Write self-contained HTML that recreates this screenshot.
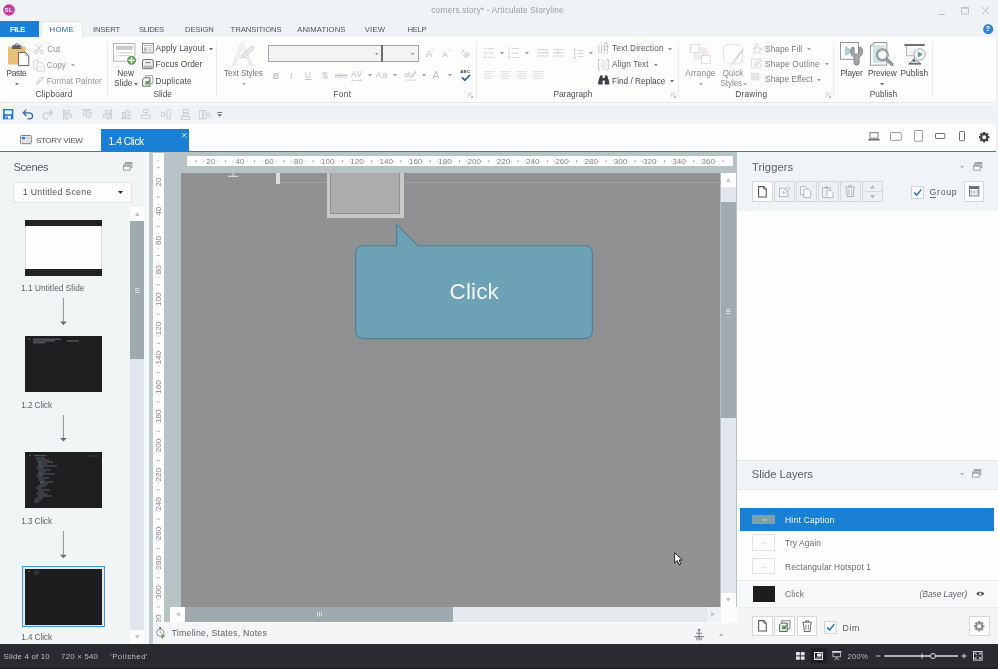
<!DOCTYPE html>
<html><head><meta charset="utf-8"><title>corners.story - Articulate Storyline</title>
<style>
*{box-sizing:border-box;margin:0;padding:0}
html,body{width:998px;height:669px;overflow:hidden}
body{position:relative;background:#eff3f5;font-family:"Liberation Sans",sans-serif;font-size:9px;color:#5a5e62}
.a{position:absolute}
.t{position:absolute;white-space:nowrap;line-height:1}
svg{position:absolute;overflow:visible}
#w{position:absolute;left:0;top:0;width:998px;height:669px;will-change:transform}

</style></head>
<body>
<div id="w">
<div class="a" style="left:0px;top:0px;width:998px;height:22px;background:#f0f3f5;"></div>
<div class="a" style="left:0px;top:22px;width:998px;height:15px;background:#f0f3f5;"></div>
<div class="a" style="left:0px;top:37px;width:998px;height:65.5px;background:#fdfdfc;"></div>
<div class="a" style="left:0px;top:102px;width:998px;height:1px;background:#e4e7ea;"></div>
<div class="a" style="left:0px;top:103px;width:998px;height:2px;background:#f8f9fa;"></div>
<div class="a" style="left:0px;top:105px;width:998px;height:19.4px;background:#eff3f5;"></div>
<div class="a" style="left:0px;top:124px;width:998px;height:27px;background:#fdfdfd;"></div>
<div class="a" style="left:0px;top:150.8px;width:998px;height:1.5px;background:#1a80d6;"></div>
<div class="a" style="left:0px;top:152px;width:149.4px;height:492px;background:#f2f5f6;"></div>
<div class="a" style="left:145.6px;top:152.3px;width:3.8px;height:491.7px;background:#f9fafb;"></div>
<div class="a" style="left:149.4px;top:152px;width:3.8px;height:492px;background:#c0cbcf;"></div>
<div class="a" style="left:153.2px;top:152px;width:583.4px;height:470px;background:#b8c3c5;"></div>
<div class="a" style="left:153.2px;top:622px;width:583.4px;height:1px;background:#fdfdfd;"></div>
<div class="a" style="left:153.2px;top:623px;width:583.4px;height:21px;background:#f3f5f6;"></div>
<div class="a" style="left:736.6px;top:152px;width:261.4px;height:492px;background:#fdfdfc;"></div>
<div class="a" style="left:0px;top:644px;width:998px;height:25px;background:#2c2a31;"></div>
<svg style="left:3px;top:3.5px" width="12" height="12" viewBox="0 0 12 12"><circle cx="6" cy="6" r="5.8" fill="#c23d9c"/></svg>
<svg style="left:938.4px;top:5.6px" width="60" height="10" viewBox="0 0 60 10"><path d="M1 8.5H7" stroke="#c2c6c9" stroke-width="1" fill="none"/><rect x="23.5" y="1.5" width="7" height="6.5" stroke="#c2c6c9" fill="none"/><path d="M23 2H31" stroke="#c2c6c9" stroke-width="1.6"/><path d="M44 1L51 8M51 1L44 8" stroke="#b4b8bb" stroke-width="1" fill="none"/></svg>
<svg style="left:982.6px;top:23.6px" width="10.4" height="10.4" viewBox="0 0 10.4 10.4"><circle cx="5.2" cy="5.2" r="5" fill="#2b74c6"/><circle cx="5.2" cy="5.2" r="3.9" fill="#3a86d6"/></svg>
<div class="a" style="left:0px;top:21.2px;width:38.8px;height:15.8px;background:#1a80d6;"></div>
<div class="a" style="left:41.3px;top:20.9px;width:42px;height:17.1px;background:#fdfdfc;border:1px solid #e1e5e8;border-bottom:none"></div>
<div class="a" style="left:106.5px;top:41px;width:1px;height:57px;background:#eaeced;"></div>
<div class="a" style="left:216px;top:41px;width:1px;height:57px;background:#eaeced;"></div>
<div class="a" style="left:475.8px;top:41px;width:1px;height:57px;background:#eaeced;"></div>
<div class="a" style="left:678px;top:41px;width:1px;height:57px;background:#eaeced;"></div>
<div class="a" style="left:833px;top:41px;width:1px;height:57px;background:#eaeced;"></div>
<div class="a" style="left:932.4px;top:41px;width:1px;height:57px;background:#eaeced;"></div>
<svg style="left:14.5px;top:83.1px" width="4" height="2.4" viewBox="0 0 4 2.4"><path d="M0 0H4L2.0 2.4Z" fill="#7a7e82"/></svg>
<svg style="left:70.6px;top:64.1px" width="4" height="2.4" viewBox="0 0 4 2.4"><path d="M0 0H4L2.0 2.4Z" fill="#a8acb0"/></svg>
<svg style="left:133.5px;top:82.8px" width="4" height="2.4" viewBox="0 0 4 2.4"><path d="M0 0H4L2.0 2.4Z" fill="#6a6e72"/></svg>
<svg style="left:209.0px;top:47.6px" width="4" height="2.4" viewBox="0 0 4 2.4"><path d="M0 0H4L2.0 2.4Z" fill="#6a6e72"/></svg>
<svg style="left:242.0px;top:83.1px" width="4" height="2.4" viewBox="0 0 4 2.4"><path d="M0 0H4L2.0 2.4Z" fill="#a8acb0"/></svg>
<div class="a" style="left:268px;top:45px;width:114px;height:16.5px;background:#f1f3f5;border:1px solid #a3a6a9"></div>
<div class="a" style="left:381.5px;top:45px;width:37px;height:16.5px;background:#f1f3f5;border:1px solid #a3a6a9"></div>
<div class="a" style="left:381.4px;top:45px;width:1.3px;height:16.5px;background:#6c6f72;"></div>
<svg style="left:375.3px;top:52.6px" width="3.4" height="2" viewBox="0 0 3.4 2"><path d="M0 0H3.4L1.7 2Z" fill="#8a8e92"/></svg>
<svg style="left:411.3px;top:52.6px" width="3.4" height="2" viewBox="0 0 3.4 2"><path d="M0 0H3.4L1.7 2Z" fill="#8a8e92"/></svg>
<svg style="left:668.0px;top:47.6px" width="4" height="2.4" viewBox="0 0 4 2.4"><path d="M0 0H4L2.0 2.4Z" fill="#8a8e92"/></svg>
<svg style="left:653.5px;top:63.6px" width="4" height="2.4" viewBox="0 0 4 2.4"><path d="M0 0H4L2.0 2.4Z" fill="#8a8e92"/></svg>
<svg style="left:670.0px;top:80.1px" width="4" height="2.4" viewBox="0 0 4 2.4"><path d="M0 0H4L2.0 2.4Z" fill="#6a6e72"/></svg>
<svg style="left:698.6px;top:83.1px" width="4" height="2.4" viewBox="0 0 4 2.4"><path d="M0 0H4L2.0 2.4Z" fill="#a8acb0"/></svg>
<svg style="left:743.0px;top:83.1px" width="4" height="2.4" viewBox="0 0 4 2.4"><path d="M0 0H4L2.0 2.4Z" fill="#a8acb0"/></svg>
<svg style="left:807.3px;top:48.1px" width="4" height="2.4" viewBox="0 0 4 2.4"><path d="M0 0H4L2.0 2.4Z" fill="#a0a4a8"/></svg>
<svg style="left:824.9px;top:63.1px" width="4" height="2.4" viewBox="0 0 4 2.4"><path d="M0 0H4L2.0 2.4Z" fill="#a0a4a8"/></svg>
<svg style="left:817.0px;top:78.5px" width="4" height="2.4" viewBox="0 0 4 2.4"><path d="M0 0H4L2.0 2.4Z" fill="#a0a4a8"/></svg>
<svg style="left:879.8px;top:83.1px" width="4" height="2.4" viewBox="0 0 4 2.4"><path d="M0 0H4L2.0 2.4Z" fill="#6a6e72"/></svg>
<div class="a" style="left:101px;top:129px;width:87.5px;height:23px;background:#1a80d6;"></div>
<svg style="left:181.5px;top:132.5px" width="4.4" height="4.4" viewBox="0 0 4.4 4.4"><path d="M0 0L4.4 4.4M4.4 0L0 4.4" stroke="#fff" stroke-width="0.9"/></svg>
<svg style="left:7px;top:43px" width="23" height="24" viewBox="0 0 23 24"><rect x="1" y="3.4" width="17.6" height="18.2" rx="1" fill="#e9bf75"/>
<rect x="5.2" y="2.2" width="9.2" height="3.8" rx="0.6" fill="#5b5b68"/><rect x="8" y="0.8" width="3.6" height="2.6" rx="1" fill="none" stroke="#5b5b68" stroke-width="1"/>
<rect x="12.6" y="4" width="1.4" height="1" fill="#7cc36a"/>
<path d="M11.6 9.4H18.4L21.8 12.8V22.6H11.6Z" fill="#fdfdfd" stroke="#55555f" stroke-width="0.9"/><path d="M18.4 9.4V12.8H21.8" fill="none" stroke="#9a9aa2" stroke-width="0.6"/></svg>
<svg style="left:33.5px;top:44px" width="10" height="10" viewBox="0 0 10 10"><path d="M1.6 0L6.6 6.6M8.4 0L3.4 6.6" stroke="#c4c7ca" stroke-width="0.9" fill="none"/><circle cx="2.2" cy="7.8" r="1.7" fill="none" stroke="#c4c7ca" stroke-width="0.9"/><circle cx="7.8" cy="7.8" r="1.7" fill="none" stroke="#c4c7ca" stroke-width="0.9"/></svg>
<svg style="left:33px;top:59.5px" width="12" height="11.5" viewBox="0 0 12 11.5"><path d="M0.5 0.5H5.4L7.4 2.5V9.2H0.5Z" fill="#fbfbfb" stroke="#cfd2d5" stroke-width="0.8"/><path d="M4 2.6H9L11.3 4.9V11H4Z" fill="#fbfbfb" stroke="#c6c9cc" stroke-width="0.8"/><path d="M5.6 6H9.4M5.6 7.6H9.4" stroke="#dcdfe1" stroke-width="0.7"/></svg>
<svg style="left:34.5px;top:76px" width="9.5" height="9.5" viewBox="0 0 9.5 9.5"><path d="M0.6 6.4L4.6 2.6L6.8 4.8L2.8 8.8Z" fill="#d9dbde"/><path d="M5.4 2L7.4 0.4L9 2L7.4 4Z" fill="#cfd2d5"/><path d="M1.2 7L3 8.6" stroke="#bfc2c5" stroke-width="0.8"/></svg>
<svg style="left:113px;top:43px" width="24" height="23" viewBox="0 0 24 23"><rect x="0.5" y="0.5" width="21.4" height="17.8" fill="#fcfcfc" stroke="#b4b7ba" stroke-width="1"/>
<rect x="3" y="2.8" width="16.6" height="4.2" fill="#c9cbcd"/><path d="M3.2 9.8H4.4M5.6 9.8H19M3.2 12.6H4.4M5.6 12.6H16" stroke="#c4c6c9" stroke-width="0.9"/>
<circle cx="18.6" cy="17.2" r="5.1" fill="#fdfdfc"/><circle cx="18.6" cy="17.2" r="4.5" fill="#62a45c"/><path d="M18.6 14.2V20.2M15.6 17.2H21.6" stroke="#eef6ec" stroke-width="1.5"/></svg>
<svg style="left:142px;top:43px" width="12" height="10.5" viewBox="0 0 12 10.5"><rect x="0.5" y="0.5" width="10.8" height="9.4" fill="#fbfbfb" stroke="#808388" stroke-width="0.9"/><path d="M2 2.6H10" stroke="#a9acb0" stroke-width="0.9"/><rect x="2" y="4.2" width="2.6" height="4.4" fill="#b6b9bc"/><path d="M5.8 4.8H9.8M5.8 6.4H9.8M5.8 8H9.8" stroke="#b0b3b6" stroke-width="0.7"/></svg>
<svg style="left:142px;top:59.4px" width="12" height="10.5" viewBox="0 0 12 10.5"><rect x="0.5" y="0.5" width="10.8" height="9.2" rx="1.6" fill="#eceeef" stroke="#6c6f74" stroke-width="1"/><rect x="1.6" y="6.6" width="8.6" height="2.4" fill="#b8bbbe"/><path d="M3.4 3.6H8.4" stroke="#7d8084" stroke-width="1.1"/></svg>
<svg style="left:142px;top:74.6px" width="12" height="12" viewBox="0 0 12 12"><path d="M3.6 0.6H10.8V8.6H3.6Z" fill="#fbfbfb" stroke="#8b8e92" stroke-width="0.8"/><path d="M0.6 4.6L2.6 2.8H8V11.2H0.6Z" fill="#fbfbfb" stroke="#55585d" stroke-width="0.9"/><path d="M3.4 6H7V9.6H3.4Z" fill="#6aa863"/><path d="M4 7.6L5 8.8L7.6 5" stroke="#3e7d3a" stroke-width="0.8" fill="none"/></svg>
<svg style="left:232px;top:43px" width="24" height="23" viewBox="0 0 24 23"><path d="M0.6 22.2L9.2 0.6H10.6L20.6 22.2H18.2L14.8 14.6H5.6L2.8 22.2Z" fill="#fcfcfc" stroke="#d3d5d8" stroke-width="0.8"/>
<path d="M6.6 12.4H13.8L10 3.4Z" fill="#fdfdfc" stroke="#d9dbde" stroke-width="0.7"/>
<path d="M9.4 15.2L10.4 11.6L19.4 2.6L22.4 5.2L13.2 14.2Z" fill="#e5e7e9" stroke="#cfd1d4" stroke-width="0.7"/></svg>
<svg style="left:351.3px;top:78.6px" width="11" height="3" viewBox="0 0 11 3"><path d="M0.6 1.5H10.4M2 0.2L0.6 1.5L2 2.8M9 0.2L10.4 1.5L9 2.8" stroke="#c6c9cc" stroke-width="0.7" fill="none"/></svg>
<svg style="left:367.5px;top:74.4px" width="4" height="2.4" viewBox="0 0 4 2.4"><path d="M0 0H4L2.0 2.4Z" fill="#9a9ea2"/></svg>
<svg style="left:392.6px;top:74.4px" width="4" height="2.4" viewBox="0 0 4 2.4"><path d="M0 0H4L2.0 2.4Z" fill="#9a9ea2"/></svg>
<svg style="left:404.5px;top:70px" width="12" height="11" viewBox="0 0 12 11"><path d="M6.2 7.4L11 1.2" stroke="#c9ccce" stroke-width="1.6"/><path d="M0.4 10.2H11.4" stroke="#dfe1e3" stroke-width="1.2"/></svg>
<svg style="left:422.0px;top:74.4px" width="4" height="2.4" viewBox="0 0 4 2.4"><path d="M0 0H4L2.0 2.4Z" fill="#9a9ea2"/></svg>
<svg style="left:447.5px;top:74.4px" width="4" height="2.4" viewBox="0 0 4 2.4"><path d="M0 0H4L2.0 2.4Z" fill="#9a9ea2"/></svg>
<svg style="left:460.5px;top:73.5px" width="10" height="7.5" viewBox="0 0 10 7.5"><path d="M1 3.4L3.8 6.2L9 0.8" stroke="#2b6ca3" stroke-width="1.7" fill="none"/></svg>
<svg style="left:432.2px;top:47.6px" width="3" height="3" viewBox="0 0 3 3"><path d="M0.2 2.4L1.5 0.6L2.8 2.4" stroke="#c6c9cc" stroke-width="0.7" fill="none"/></svg>
<svg style="left:448.4px;top:48px" width="3" height="3" viewBox="0 0 3 3"><path d="M0.2 0.6L1.5 2.4L2.8 0.6" stroke="#c6c9cc" stroke-width="0.7" fill="none"/></svg>
<svg style="left:462px;top:50.6px" width="9.5" height="8" viewBox="0 0 9.5 8"><path d="M0.6 5L5.4 0.6L8.8 3.6L4 7.6Z" fill="#dcdee0"/></svg>
<svg style="left:467.6px;top:92.8px" width="5" height="5" viewBox="0 0 5 5"><path d="M0.4 4V0.4H4" stroke="#c3c6c9" stroke-width="0.8" fill="none"/><path d="M2 2L4.4 4.4M4.6 2.6V4.6H2.6" stroke="#aeb1b4" stroke-width="0.8" fill="none"/></svg>
<svg style="left:670.6px;top:92.8px" width="5" height="5" viewBox="0 0 5 5"><path d="M0.4 4V0.4H4" stroke="#c3c6c9" stroke-width="0.8" fill="none"/><path d="M2 2L4.4 4.4M4.6 2.6V4.6H2.6" stroke="#aeb1b4" stroke-width="0.8" fill="none"/></svg>
<svg style="left:826px;top:92.8px" width="5" height="5" viewBox="0 0 5 5"><path d="M0.4 4V0.4H4" stroke="#c3c6c9" stroke-width="0.8" fill="none"/><path d="M2 2L4.4 4.4M4.6 2.6V4.6H2.6" stroke="#aeb1b4" stroke-width="0.8" fill="none"/></svg>
<svg style="left:484px;top:47px" width="11" height="12" viewBox="0 0 11 12"><path d="M3.4 1.5H10M3.4 6H10M3.4 10.4H10" stroke="#cfd2d4" stroke-width="0.9"/><path d="M0.4 1.5H1.8M0.4 6H1.8M0.4 10.4H1.8" stroke="#c3c6c9" stroke-width="1.2"/></svg>
<svg style="left:500.2px;top:52.4px" width="4" height="2.4" viewBox="0 0 4 2.4"><path d="M0 0H4L2.0 2.4Z" fill="#9a9ea2"/></svg>
<svg style="left:508.4px;top:47px" width="11.5" height="12" viewBox="0 0 11.5 12"><path d="M3.6 1.5H11M3.6 6H11M3.6 10.4H11" stroke="#cfd2d4" stroke-width="0.9"/><path d="M1 0V3M1 4.5V7.5M1 9V12" stroke="#c3c6c9" stroke-width="0.9"/></svg>
<svg style="left:525.0px;top:52.4px" width="4" height="2.4" viewBox="0 0 4 2.4"><path d="M0 0H4L2.0 2.4Z" fill="#9a9ea2"/></svg>
<svg style="left:537px;top:49.4px" width="12" height="8" viewBox="0 0 12 8"><path d="M0 0.6H11.6M0 3.8H7M0 7H11.6" stroke="#cfd2d4" stroke-width="0.9"/><path d="M5.4 3.8H11M9.4 2.2L11 3.8L9.4 5.4" stroke="#c3c6c9" stroke-width="0.8" fill="none"/></svg>
<svg style="left:553.4px;top:49.4px" width="12" height="8" viewBox="0 0 12 8"><path d="M0 0.6H11.6M4.6 3.8H11.6M0 7H11.6" stroke="#cfd2d4" stroke-width="0.9"/><path d="M0.4 3.8H6M4.4 2.2L6 3.8L4.4 5.4" stroke="#c3c6c9" stroke-width="0.8" fill="none"/></svg>
<svg style="left:573.4px;top:47.6px" width="11" height="11.5" viewBox="0 0 11 11.5"><path d="M4.6 2.6H10.6M4.6 5.6H10.6M4.6 8.6H10.6" stroke="#cfd2d4" stroke-width="0.9"/><path d="M1.6 0.6V10.8M0.2 2L1.6 0.6L3 2M0.2 9.4L1.6 10.8L3 9.4" stroke="#c3c6c9" stroke-width="0.8" fill="none"/></svg>
<svg style="left:589.3px;top:52.4px" width="4" height="2.4" viewBox="0 0 4 2.4"><path d="M0 0H4L2.0 2.4Z" fill="#9a9ea2"/></svg>
<svg style="left:484.1px;top:71px" width="10.4" height="8.5" viewBox="0 0 10.4 8.5"><path d="M0 0.6H10.4M0 2.9H7.4M0 5.2H10.4M0 7.5H7.4" stroke="#d3d6d8" stroke-width="0.8" fill="none"/></svg>
<svg style="left:500.1px;top:71px" width="10.4" height="8.5" viewBox="0 0 10.4 8.5"><path d="M0 0.6H10.4M1.6 2.9H8.8M0 5.2H10.4M1.6 7.5H8.8" stroke="#d3d6d8" stroke-width="0.8" fill="none"/></svg>
<svg style="left:516.4px;top:71px" width="10.4" height="8.5" viewBox="0 0 10.4 8.5"><path d="M0 0.6H10.4M3 2.9H10.4M0 5.2H10.4M3 7.5H10.4" stroke="#d3d6d8" stroke-width="0.8" fill="none"/></svg>
<svg style="left:532.5px;top:71px" width="10.4" height="8.5" viewBox="0 0 10.4 8.5"><path d="M0 0.6H10.4M0 2.9H10.4M0 5.2H10.4M0 7.5H10.4" stroke="#d3d6d8" stroke-width="0.8" fill="none"/></svg>
<svg style="left:598.2px;top:42px" width="11" height="12" viewBox="0 0 11 12"><path d="M0.8 2.6V11.6M3.4 2.6V11.6" stroke="#b9bcbf" stroke-width="0.8"/><path d="M6.2 11.6V4.4M9.6 11.6V4.4M6.2 7.6H9.6" stroke="#b9bcbf" stroke-width="0.8" fill="none"/><path d="M5.6 4.6L7.9 0.4L10.2 4.6Z" fill="none" stroke="#aeb1b4" stroke-width="0.8"/></svg>
<svg style="left:598.2px;top:59px" width="11" height="11.4" viewBox="0 0 11 11.4"><path d="M2.4 0.5H0.5V10.8H2.4M8.4 0.5H10.3V10.8H8.4" stroke="#b4b7ba" stroke-width="0.8" fill="none"/><path d="M2.6 4.2H8.2M2.6 5.8H8.2M2.6 7.4H8.2" stroke="#d0d3d5" stroke-width="0.7"/><path d="M4.2 2.6L5.4 1.2L6.6 2.6M4.2 8.8L5.4 10.2L6.6 8.8" stroke="#b4b7ba" stroke-width="0.7" fill="none"/></svg>
<svg style="left:598px;top:75px" width="11.4" height="10" viewBox="0 0 11.4 10"><path d="M2.2 0.6H4.6V3H6.8V0.6H9.2L11.2 6.4V9.4H6.8V5.4H4.6V9.4H0.2V6.4Z" fill="#3c3c45"/><path d="M0.2 6.6H4.6M6.8 6.6H11.2" stroke="#6d6d76" stroke-width="0.6"/></svg>
<svg style="left:689.6px;top:44px" width="21" height="20" viewBox="0 0 21 20"><rect x="3.6" y="3.6" width="13.6" height="12" fill="#f2e9eb"/><rect x="7.2" y="7" width="4.4" height="4" fill="#f8f2f3"/>
<rect x="0.5" y="0.5" width="8.6" height="8.2" fill="#fdfdfc" stroke="#d4d6d9" stroke-width="0.8"/><rect x="11.6" y="11.3" width="8.6" height="8.2" fill="#fdfdfc" stroke="#d4d6d9" stroke-width="0.8"/></svg>
<svg style="left:723.4px;top:44.4px" width="22" height="21.5" viewBox="0 0 22 21.5"><rect x="0.5" y="0.5" width="19" height="19.4" rx="4.6" fill="#fdfdfc" stroke="#dcdee0" stroke-width="0.9"/>
<path d="M21.2 5.6L14.6 14.6L12.8 13.4L19.6 4.6Z" fill="#d5d7da"/><path d="M12.6 13.6L14.6 15L11 19.8L7.6 20.6L9.6 17.6Z" fill="#dfe1e3"/></svg>
<svg style="left:751.6px;top:43.4px" width="11" height="10.5" viewBox="0 0 11 10.5"><path d="M1.4 5L2.6 9.4H7.4L8.6 5Z" fill="#fdfdfc" stroke="#c9ccce" stroke-width="0.8"/><path d="M3.6 5V1.6C3.6 0.2 5.6 0.2 5.6 1.6V3.4" stroke="#c9ccce" stroke-width="0.8" fill="none"/><path d="M8.8 4.6C10.4 5.6 10.4 7.2 9.6 8" stroke="#d4d6d9" stroke-width="0.8" fill="none"/><path d="M0 10H9" stroke="#e8e9eb" stroke-width="0.9"/></svg>
<svg style="left:751.2px;top:58.4px" width="11.5" height="10.5" viewBox="0 0 11.5 10.5"><path d="M7 0.8H0.5V9.8H9.6V5" stroke="#d6d8db" stroke-width="0.8" fill="none"/><path d="M3.6 7.8L4.2 5.6L9.2 0.6L10.8 2.2L5.8 7.2Z" fill="#fdfdfc" stroke="#bfc2c5" stroke-width="0.8"/></svg>
<svg style="left:751.2px;top:73.4px" width="10" height="9" viewBox="0 0 10 9"><rect x="2.4" y="2.4" width="7" height="5.8" fill="#ecedef"/><rect x="0.4" y="0.4" width="7.2" height="5.8" fill="#e3e5e7" stroke="#d6d8db" stroke-width="0.6"/></svg>
<svg style="left:840.4px;top:42.2px" width="23" height="23.5" viewBox="0 0 23 23.5"><rect x="0.5" y="0.5" width="18" height="16.8" fill="#fcfcfc" stroke="#8b8e92" stroke-width="0.9"/>
<path d="M5.8 4.8V13.2L11.6 9Z" fill="#b9d6dd" stroke="#7fb0bc" stroke-width="0.8"/>
<path d="M12.2 5.2C10.6 6.6 10.4 9 10.8 10.6C11.2 13 12.6 14.6 14.2 15.4V21.4C14.2 23.6 19 23.6 19 21.4V15.4C20.6 14.6 22 13 22.4 10.6C22.8 9 22.6 6.6 21 5.2L19.2 5.8V10C19.2 11.6 18.2 12.2 16.6 12.2C15 12.2 14 11.6 14 10V5.8Z" fill="#a6a9ac" stroke="#6b6e72" stroke-width="0.8" stroke-linejoin="round"/></svg>
<svg style="left:869.6px;top:42.2px" width="24" height="24" viewBox="0 0 24 24"><path d="M4 0.5H16.8V23.2H0.5V4Z" fill="#fcfcfc" stroke="#8b8e92" stroke-width="0.9"/><path d="M4 0.5V4H0.5" fill="none" stroke="#8b8e92" stroke-width="0.7"/>
<rect x="3" y="3.2" width="11.6" height="17.6" fill="#cfe4e9"/>
<path d="M16.6 17.2L22 22.4" stroke="#74777b" stroke-width="3" stroke-linecap="round"/><path d="M16.6 17.2L22 22.4" stroke="#a9acaf" stroke-width="1.4" stroke-linecap="round"/>
<circle cx="12.4" cy="12.8" r="5.4" fill="#fafcfc" stroke="#85888c" stroke-width="2.2"/><circle cx="12.4" cy="12.8" r="5.4" fill="none" stroke="#b9bcbf" stroke-width="0.8"/></svg>
<svg style="left:904px;top:44px" width="22" height="21" viewBox="0 0 22 21"><path d="M0.4 1H20.8" stroke="#4b4b55" stroke-width="1.6"/><path d="M2.6 2V11.8H13" stroke="#a4a7aa" stroke-width="0.9" fill="none"/><path d="M5 5H12M5 7.2H11M5 9.4H10" stroke="#dcdee0" stroke-width="0.8"/>
<path d="M10.4 12V17.4M5 19.6L8.4 16.8H13L16.6 19.6Z" fill="#dfe1e3" stroke="#66686e" stroke-width="0.8"/><path d="M4.6 20H17" stroke="#4b4b55" stroke-width="1"/>
<path d="M8.8 14.6L11.2 17L8.6 17.4Z" fill="#44444c"/>
<circle cx="15.6" cy="10.4" r="5.6" fill="#fcfcfc" stroke="#8e9195" stroke-width="0.8"/><path d="M13.8 7.2V13.6L18.8 10.4Z" fill="#5d9bab"/></svg>
<svg style="left:3px;top:109.4px" width="10.5" height="10.5" viewBox="0 0 10.5 10.5"><rect x="0.5" y="0.5" width="9.4" height="9.4" fill="#1c79c9" stroke="#1c69b4" stroke-width="0.8"/><rect x="1.6" y="1.4" width="7.2" height="3.8" fill="#f4f8fc"/><rect x="2.6" y="6.8" width="5.2" height="3" fill="#f4f8fc"/><rect x="3.4" y="7.6" width="1.6" height="2.2" fill="#1c69b4"/></svg>
<svg style="left:22px;top:109.0px" width="11.5" height="10.5" viewBox="0 0 11.5 10.5"><path d="M1.4 3.8H6.8C9.4 3.8 10.6 5.4 10.6 7C10.6 8.6 9.2 9.8 7.4 9.8H5.6" stroke="#2f66a6" stroke-width="1.25" fill="none"/><path d="M4.4 0.6L1.2 3.8L4.4 7" stroke="#2f66a6" stroke-width="1.25" fill="none"/></svg>
<svg style="left:42px;top:109.0px" width="11.5" height="10.5" viewBox="0 0 11.5 10.5"><path d="M10 3.8H4.8C2.2 3.8 1 5.4 1 7C1 8.6 2.4 9.8 4.2 9.8H6" stroke="#c9ccd0" stroke-width="1.2" fill="none"/><path d="M7.2 0.6L10.4 3.8L7.2 7" stroke="#c6c9cc" stroke-width="1.3" fill="none"/></svg>
<svg style="left:62.6px;top:109.0px" width="9.5" height="11" viewBox="0 0 9.5 11"><path d="M0.6 0V10.6" stroke="#c3c8cc" stroke-width="0.9"/><rect x="2" y="1.4" width="4.6" height="2.6" fill="none" stroke="#c3c8cc" stroke-width="0.8"/><rect x="2" y="5.4" width="6.6" height="2.6" fill="none" stroke="#c3c8cc" stroke-width="0.8"/><path d="M5 9.6H2M3.2 8.6L2 9.6L3.2 10.6" stroke="#c3c8cc" stroke-width="0.7" fill="none"/></svg>
<svg style="left:81.8px;top:109.2px" width="11" height="10" viewBox="0 0 11 10"><path d="M0 0.6H10.4" stroke="#c3c8cc" stroke-width="0.9"/><rect x="1.4" y="2" width="2.4" height="4.6" fill="none" stroke="#c3c8cc" stroke-width="0.8"/><rect x="4.8" y="2" width="2.4" height="6.6" fill="none" stroke="#c3c8cc" stroke-width="0.8"/><path d="M9.2 8V3M8.2 4.2L9.2 3L10.2 4.2" stroke="#c3c8cc" stroke-width="0.7" fill="none"/></svg>
<svg style="left:103px;top:109.0px" width="9.5" height="11" viewBox="0 0 9.5 11"><path d="M8.6 0V10.6" stroke="#c3c8cc" stroke-width="0.9"/><rect x="2.6" y="1.4" width="4.6" height="2.6" fill="none" stroke="#c3c8cc" stroke-width="0.8"/><rect x="0.6" y="5.4" width="6.6" height="2.6" fill="none" stroke="#c3c8cc" stroke-width="0.8"/><path d="M3.6 9.6H6.6M5.4 8.6L6.6 9.6L5.4 10.6" stroke="#c3c8cc" stroke-width="0.7" fill="none"/></svg>
<svg style="left:121.4px;top:109.2px" width="11" height="10" viewBox="0 0 11 10"><path d="M0 9.6H10.4" stroke="#c3c8cc" stroke-width="0.9"/><rect x="1.4" y="3.6" width="2.4" height="4.6" fill="none" stroke="#c3c8cc" stroke-width="0.8"/><rect x="4.8" y="1.6" width="2.4" height="6.6" fill="none" stroke="#c3c8cc" stroke-width="0.8"/><path d="M9.2 2V7M8.2 5.8L9.2 7L10.2 5.8" stroke="#c3c8cc" stroke-width="0.7" fill="none"/></svg>
<svg style="left:141px;top:109.2px" width="10" height="10.5" viewBox="0 0 10 10.5"><rect x="2.6" y="0.6" width="4.4" height="3" fill="none" stroke="#c3c8cc" stroke-width="0.8"/><rect x="0.6" y="6.2" width="8.4" height="3.2" fill="none" stroke="#c3c8cc" stroke-width="0.8"/><path d="M4.8 3.6V6.2" stroke="#c3c8cc" stroke-width="0.8"/></svg>
<svg style="left:160.6px;top:109.2px" width="10.5" height="10.5" viewBox="0 0 10.5 10.5"><rect x="0.6" y="3.2" width="3" height="4.4" fill="none" stroke="#c3c8cc" stroke-width="0.8"/><rect x="6" y="0.8" width="3.2" height="9" fill="none" stroke="#c3c8cc" stroke-width="0.8"/><path d="M3.6 5.4H6" stroke="#c3c8cc" stroke-width="0.8"/></svg>
<svg style="left:181.4px;top:109.0px" width="10" height="11" viewBox="0 0 10 11"><rect x="2.2" y="0.6" width="5" height="2.8" fill="none" stroke="#c3c8cc" stroke-width="0.8"/><rect x="2.2" y="4.2" width="5" height="2.8" fill="none" stroke="#c3c8cc" stroke-width="0.8"/><rect x="0.6" y="7.8" width="8.2" height="2.8" fill="none" stroke="#c3c8cc" stroke-width="0.8"/></svg>
<svg style="left:199.4px;top:109.6px" width="12" height="9.5" viewBox="0 0 12 9.5"><rect x="0.6" y="0.6" width="2.8" height="8.2" fill="none" stroke="#c3c8cc" stroke-width="0.8"/><rect x="4.2" y="0.6" width="2.8" height="8.2" fill="none" stroke="#c3c8cc" stroke-width="0.8"/><rect x="8" y="3" width="2.8" height="3.4" fill="none" stroke="#c3c8cc" stroke-width="0.8"/></svg>
<svg style="left:216.6px;top:112.4px" width="5.4" height="5" viewBox="0 0 5.4 5"><path d="M0.2 0.5H5.2" stroke="#6a6e72" stroke-width="0.9"/><path d="M0.4 2.2H5L2.7 4.8Z" fill="#6a6e72"/></svg>
<svg style="left:20px;top:135.4px" width="12" height="9.4" viewBox="0 0 12 9.4"><rect x="0.5" y="0.5" width="10.8" height="8.2" rx="0.8" fill="#f4f5f6" stroke="#6f7276" stroke-width="0.9"/><rect x="1.8" y="1.8" width="3.4" height="2.6" fill="#2f7fd0"/><rect x="6.2" y="1.8" width="3.6" height="2.6" fill="#c9ccce"/><rect x="1.8" y="5.4" width="3.4" height="2.2" fill="#d5d7da"/><rect x="6.2" y="5.4" width="3.6" height="2.2" fill="#d5d7da"/></svg>
<svg style="left:868.4px;top:131.6px" width="12" height="9" viewBox="0 0 12 9"><rect x="2" y="0.6" width="8" height="5.6" fill="#fdfdfd" stroke="#85888c" stroke-width="1.1"/><path d="M0.2 7.8H11.8" stroke="#6d7074" stroke-width="1.5"/></svg>
<svg style="left:890.2px;top:131.8px" width="11.8" height="8.8" viewBox="0 0 11.8 8.8"><rect x="0.5" y="0.5" width="10.8" height="7.8" rx="0.8" fill="#fdfdfd" stroke="#8e9195" stroke-width="0.9"/></svg>
<svg style="left:913.8px;top:130px" width="9.2" height="11.8" viewBox="0 0 9.2 11.8"><rect x="0.5" y="0.5" width="8.2" height="10.8" rx="0.8" fill="#fdfdfd" stroke="#8e9195" stroke-width="0.9"/></svg>
<svg style="left:934.9px;top:133px" width="10.4" height="6" viewBox="0 0 10.4 6"><rect x="0.5" y="0.5" width="9.4" height="5" rx="0.5" fill="#fdfdfd" stroke="#6d7074" stroke-width="1"/></svg>
<svg style="left:959px;top:130.9px" width="6" height="10.2" viewBox="0 0 6 10.2"><rect x="0.5" y="0.5" width="5" height="9.2" rx="0.7" fill="#fdfdfd" stroke="#6d7074" stroke-width="1"/></svg>
<svg style="left:979.3px;top:131.5px" width="10.4" height="10.4" viewBox="0 0 10.4 10.4"><rect x="4.06" y="0" width="2.29" height="10.40" fill="#3f3f49" transform="rotate(0 5.2 5.2)"/><rect x="4.06" y="0" width="2.29" height="10.40" fill="#3f3f49" transform="rotate(45 5.2 5.2)"/><rect x="4.06" y="0" width="2.29" height="10.40" fill="#3f3f49" transform="rotate(90 5.2 5.2)"/><rect x="4.06" y="0" width="2.29" height="10.40" fill="#3f3f49" transform="rotate(135 5.2 5.2)"/><circle cx="5.2" cy="5.2" r="3.85" fill="#3f3f49"/><circle cx="5.2" cy="5.2" r="1.98" fill="#fdfdfd"/></svg>
<div class="a" style="left:996px;top:37px;width:2px;height:115.4px;background:#f0f3f5;"></div>
<svg style="left:123px;top:162px" width="9.46" height="8.8" viewBox="0 0 8.6 8"><rect x="2" y="0.5" width="6" height="4.6" fill="#f2f5f6" stroke="#9da1a5" stroke-width="0.9"/><path d="M2 1.4H8" stroke="#9da1a5" stroke-width="1.4"/><rect x="0.5" y="2.8" width="6" height="4.6" fill="#fdfdfd" stroke="#9da1a5" stroke-width="0.9"/><path d="M0.5 3.6H6.5" stroke="#9da1a5" stroke-width="1.4"/></svg>
<div class="a" style="left:13.4px;top:181.5px;width:118.6px;height:21.1px;background:#fdfdfd;border:1px solid #e1e5e8"></div>
<svg style="left:117.8px;top:191.3px" width="5" height="3" viewBox="0 0 5 3"><path d="M0 0H5L2.5 3Z" fill="#2a2a2e"/></svg>
<div class="a" style="left:130px;top:207px;width:14.4px;height:437px;background:#e1e5ed;"></div>
<div class="a" style="left:130px;top:207px;width:14.4px;height:14px;background:#fdfdfd;"></div>
<svg style="left:135px;top:211.6px" width="4.6" height="4" viewBox="0 0 4.6 4"><path d="M2.3 0L4.6 4H0Z" fill="#c0c4c8"/></svg>
<div class="a" style="left:130px;top:221px;width:14.4px;height:137.5px;background:#9faaaf;"></div>
<svg style="left:135px;top:288px" width="4.4" height="5" viewBox="0 0 4.4 5"><path d="M0 0.5H4.4M0 2.5H4.4M0 4.5H4.4" stroke="#e8ecef" stroke-width="0.8"/></svg>
<div class="a" style="left:130px;top:630px;width:14.4px;height:14px;background:#fdfdfd;"></div>
<svg style="left:135px;top:634.6px" width="4.6" height="4" viewBox="0 0 4.6 4"><path d="M0 0H4.6L2.3 4Z" fill="#c0c4c8"/></svg>
<div class="a" style="left:24.7px;top:219.5px;width:77.8px;height:56px;background:#fdfdfd;border:1px solid #d8dcdf"></div>
<div class="a" style="left:24.7px;top:219.5px;width:77.8px;height:6.4px;background:#232326;"></div>
<div class="a" style="left:24.7px;top:269px;width:77.8px;height:6.5px;background:#232326;"></div>
<svg style="left:60.4px;top:298.4px" width="6.8" height="27.2" viewBox="0 0 6.8 27.200000000000045"><path d="M3.4 0V24.200000000000045" stroke="#8e9296" stroke-width="1"/><path d="M0 23.600000000000044H6.8L3.4 27.200000000000045Z" fill="#6b6e74"/></svg>
<div class="a" style="left:24.7px;top:335.7px;width:77.8px;height:55.9px;background:#1e1e20;"></div>
<svg style="left:27px;top:338px" width="60" height="8" viewBox="0 0 60 8"><path d="M1 1.2H3M6 1.2H34M6 3H28M6 4.8H18M40 3H52" stroke="#7d8288" stroke-width="0.8"/></svg>
<svg style="left:60.4px;top:414.9px" width="6.8" height="26.5" viewBox="0 0 6.8 26.5"><path d="M3.4 0V23.5" stroke="#8e9296" stroke-width="1"/><path d="M0 22.9H6.8L3.4 26.5Z" fill="#6b6e74"/></svg>
<div class="a" style="left:24.7px;top:452.3px;width:77.8px;height:55.5px;background:#1f1f22;"></div>
<svg style="left:27px;top:454px" width="74" height="52" viewBox="0 0 74 52"><path d="M2 1.6H4M7 1.6H20M9 4H18M9 6H22M11 8H26M11 10H20M11 12H30M9 14H17M11 16H24M11 18H19M11 20H28M9 22H16M11 24H22M11 26H18M13 28H26M13 30H21M11 32H19M9 34H15M11 36H23M11 38H17M9 40H20M11 42H25M9 44H16M7 46H14M7 48H12" stroke="#6f757c" stroke-width="0.7"/>
<path d="M11 8H14M11 12H15M13 28H17M11 20H15" stroke="#4f7fb5" stroke-width="0.7"/><path d="M60 2H72" stroke="#3a3d42" stroke-width="1"/></svg>
<svg style="left:60.4px;top:530.7px" width="6.8" height="27.3" viewBox="0 0 6.8 27.299999999999955"><path d="M3.4 0V24.299999999999955" stroke="#8e9296" stroke-width="1"/><path d="M0 23.699999999999953H6.8L3.4 27.299999999999955Z" fill="#6b6e74"/></svg>
<div class="a" style="left:22.4px;top:566px;width:82.3px;height:61px;background:#e6eaec;border:1px solid #3f96da"></div>
<div class="a" style="left:25px;top:568.6px;width:77.4px;height:56px;background:#1d1d1f;"></div>
<svg style="left:27px;top:570px" width="20" height="8" viewBox="0 0 20 8"><path d="M1 1.2H3" stroke="#6a6d72" stroke-width="0.8"/><rect x="7" y="0.6" width="5" height="4" fill="#34363a"/></svg>
<div class="a" style="left:181.2px;top:172.6px;width:539.3px;height:434.4px;background:#909192;"></div>
<div class="a" style="left:279px;top:181.5px;width:441.5px;height:1px;background:#9e9f9f;"></div>
<div class="a" style="left:276.2px;top:172.6px;width:3.4px;height:11.4px;background:#dcdcdb;"></div>
<svg style="left:228px;top:172.6px" width="10.4" height="4.2" viewBox="0 0 10.4 4.2"><path d="M5.2 0V3M0 3.4H10.4" stroke="#d6d6d5" stroke-width="1.4"/></svg>
<div class="a" style="left:326.8px;top:172.6px;width:77px;height:45.9px;background:#c9c9c8;"></div>
<div class="a" style="left:330px;top:172.6px;width:70.4px;height:41.6px;background:#adadab;border:0.8px solid #8f8f8e;border-top:none"></div>
<svg style="left:355px;top:223px" width="239" height="117" viewBox="0 0 239 117"><path d="M8.6 22.8H41.6V1.2L62.8 22.8H229.4Q237.4 22.8 237.4 30.8V107.6Q237.4 115.6 229.4 115.6H8.6Q0.6 115.6 0.6 107.6V30.8Q0.6 22.8 8.6 22.8Z" fill="#6ca1b6" stroke="#4f7f95" stroke-width="1.1"/></svg>
<div class="a" style="left:153.2px;top:152.8px;width:10.6px;height:469.2px;background:#fdfdfd;"></div>
<div class="a" style="left:187px;top:155.9px;width:545.6px;height:10.4px;background:#fdfdfd;"></div>
<svg style="left:187px;top:155.9px" width="545.6" height="10.4" viewBox="0 0 545.6 10.4"><rect x="1.12" y="4.8" width="0.8" height="0.9" fill="#9a9ea2"/><path d="M8.85 3.9V6.7" stroke="#959a9e" stroke-width="0.8"/><rect x="15.77" y="4.8" width="0.8" height="0.9" fill="#9a9ea2"/><rect x="30.42" y="4.8" width="0.8" height="0.9" fill="#9a9ea2"/><path d="M38.15 3.9V6.7" stroke="#959a9e" stroke-width="0.8"/><rect x="45.07" y="4.8" width="0.8" height="0.9" fill="#9a9ea2"/><rect x="59.73" y="4.8" width="0.8" height="0.9" fill="#9a9ea2"/><path d="M67.45 3.9V6.7" stroke="#959a9e" stroke-width="0.8"/><rect x="74.37" y="4.8" width="0.8" height="0.9" fill="#9a9ea2"/><rect x="89.03" y="4.8" width="0.8" height="0.9" fill="#9a9ea2"/><path d="M96.75 3.9V6.7" stroke="#959a9e" stroke-width="0.8"/><rect x="103.67" y="4.8" width="0.8" height="0.9" fill="#9a9ea2"/><rect x="118.33" y="4.8" width="0.8" height="0.9" fill="#9a9ea2"/><path d="M126.05 3.9V6.7" stroke="#959a9e" stroke-width="0.8"/><rect x="132.97" y="4.8" width="0.8" height="0.9" fill="#9a9ea2"/><rect x="147.62" y="4.8" width="0.8" height="0.9" fill="#9a9ea2"/><path d="M155.35 3.9V6.7" stroke="#959a9e" stroke-width="0.8"/><rect x="162.28" y="4.8" width="0.8" height="0.9" fill="#9a9ea2"/><rect x="176.92" y="4.8" width="0.8" height="0.9" fill="#9a9ea2"/><path d="M184.65 3.9V6.7" stroke="#959a9e" stroke-width="0.8"/><rect x="191.58" y="4.8" width="0.8" height="0.9" fill="#9a9ea2"/><rect x="206.22" y="4.8" width="0.8" height="0.9" fill="#9a9ea2"/><path d="M213.95 3.9V6.7" stroke="#959a9e" stroke-width="0.8"/><rect x="220.87" y="4.8" width="0.8" height="0.9" fill="#9a9ea2"/><rect x="235.53" y="4.8" width="0.8" height="0.9" fill="#9a9ea2"/><path d="M243.25 3.9V6.7" stroke="#959a9e" stroke-width="0.8"/><rect x="250.17" y="4.8" width="0.8" height="0.9" fill="#9a9ea2"/><rect x="264.83" y="4.8" width="0.8" height="0.9" fill="#9a9ea2"/><path d="M272.55 3.9V6.7" stroke="#959a9e" stroke-width="0.8"/><rect x="279.48" y="4.8" width="0.8" height="0.9" fill="#9a9ea2"/><rect x="294.12" y="4.8" width="0.8" height="0.9" fill="#9a9ea2"/><path d="M301.85 3.9V6.7" stroke="#959a9e" stroke-width="0.8"/><rect x="308.78" y="4.8" width="0.8" height="0.9" fill="#9a9ea2"/><rect x="323.43" y="4.8" width="0.8" height="0.9" fill="#9a9ea2"/><path d="M331.15 3.9V6.7" stroke="#959a9e" stroke-width="0.8"/><rect x="338.08" y="4.8" width="0.8" height="0.9" fill="#9a9ea2"/><rect x="352.73" y="4.8" width="0.8" height="0.9" fill="#9a9ea2"/><path d="M360.45 3.9V6.7" stroke="#959a9e" stroke-width="0.8"/><rect x="367.38" y="4.8" width="0.8" height="0.9" fill="#9a9ea2"/><rect x="382.02" y="4.8" width="0.8" height="0.9" fill="#9a9ea2"/><path d="M389.75 3.9V6.7" stroke="#959a9e" stroke-width="0.8"/><rect x="396.68" y="4.8" width="0.8" height="0.9" fill="#9a9ea2"/><rect x="411.33" y="4.8" width="0.8" height="0.9" fill="#9a9ea2"/><path d="M419.05 3.9V6.7" stroke="#959a9e" stroke-width="0.8"/><rect x="425.98" y="4.8" width="0.8" height="0.9" fill="#9a9ea2"/><rect x="440.63" y="4.8" width="0.8" height="0.9" fill="#9a9ea2"/><path d="M448.35 3.9V6.7" stroke="#959a9e" stroke-width="0.8"/><rect x="455.27" y="4.8" width="0.8" height="0.9" fill="#9a9ea2"/><rect x="469.93" y="4.8" width="0.8" height="0.9" fill="#9a9ea2"/><path d="M477.65 3.9V6.7" stroke="#959a9e" stroke-width="0.8"/><rect x="484.58" y="4.8" width="0.8" height="0.9" fill="#9a9ea2"/><rect x="499.23" y="4.8" width="0.8" height="0.9" fill="#9a9ea2"/><path d="M506.95 3.9V6.7" stroke="#959a9e" stroke-width="0.8"/><rect x="513.88" y="4.8" width="0.8" height="0.9" fill="#9a9ea2"/><rect x="528.52" y="4.8" width="0.8" height="0.9" fill="#9a9ea2"/><path d="M536.25 3.9V6.7" stroke="#959a9e" stroke-width="0.8"/><text x="23.50" y="8.1" text-anchor="middle" font-family="Liberation Sans, sans-serif" font-size="8.1" fill="#82868a">20</text><text x="52.80" y="8.1" text-anchor="middle" font-family="Liberation Sans, sans-serif" font-size="8.1" fill="#82868a">40</text><text x="82.10" y="8.1" text-anchor="middle" font-family="Liberation Sans, sans-serif" font-size="8.1" fill="#82868a">60</text><text x="111.40" y="8.1" text-anchor="middle" font-family="Liberation Sans, sans-serif" font-size="8.1" fill="#82868a">80</text><text x="140.70" y="8.1" text-anchor="middle" font-family="Liberation Sans, sans-serif" font-size="8.1" fill="#82868a">100</text><text x="170.00" y="8.1" text-anchor="middle" font-family="Liberation Sans, sans-serif" font-size="8.1" fill="#82868a">120</text><text x="199.30" y="8.1" text-anchor="middle" font-family="Liberation Sans, sans-serif" font-size="8.1" fill="#82868a">140</text><text x="228.60" y="8.1" text-anchor="middle" font-family="Liberation Sans, sans-serif" font-size="8.1" fill="#82868a">160</text><text x="257.90" y="8.1" text-anchor="middle" font-family="Liberation Sans, sans-serif" font-size="8.1" fill="#82868a">180</text><text x="287.20" y="8.1" text-anchor="middle" font-family="Liberation Sans, sans-serif" font-size="8.1" fill="#82868a">200</text><text x="316.50" y="8.1" text-anchor="middle" font-family="Liberation Sans, sans-serif" font-size="8.1" fill="#82868a">220</text><text x="345.80" y="8.1" text-anchor="middle" font-family="Liberation Sans, sans-serif" font-size="8.1" fill="#82868a">240</text><text x="375.10" y="8.1" text-anchor="middle" font-family="Liberation Sans, sans-serif" font-size="8.1" fill="#82868a">260</text><text x="404.40" y="8.1" text-anchor="middle" font-family="Liberation Sans, sans-serif" font-size="8.1" fill="#82868a">280</text><text x="433.70" y="8.1" text-anchor="middle" font-family="Liberation Sans, sans-serif" font-size="8.1" fill="#82868a">300</text><text x="463.00" y="8.1" text-anchor="middle" font-family="Liberation Sans, sans-serif" font-size="8.1" fill="#82868a">320</text><text x="492.30" y="8.1" text-anchor="middle" font-family="Liberation Sans, sans-serif" font-size="8.1" fill="#82868a">340</text><text x="521.60" y="8.1" text-anchor="middle" font-family="Liberation Sans, sans-serif" font-size="8.1" fill="#82868a">360</text></svg>
<svg style="left:153.2px;top:152.8px;overflow:hidden" width="10.6" height="469.2" viewBox="0 0 10.6 469.2"><rect x="4.8" y="6.82" width="0.9" height="0.8" fill="#9a9ea2"/><path d="M3.9 14.55H6.7" stroke="#959a9e" stroke-width="0.8"/><rect x="4.8" y="21.47" width="0.9" height="0.8" fill="#9a9ea2"/><rect x="4.8" y="36.12" width="0.9" height="0.8" fill="#9a9ea2"/><path d="M3.9 43.85H6.7" stroke="#959a9e" stroke-width="0.8"/><rect x="4.8" y="50.77" width="0.9" height="0.8" fill="#9a9ea2"/><rect x="4.8" y="65.42" width="0.9" height="0.8" fill="#9a9ea2"/><path d="M3.9 73.15H6.7" stroke="#959a9e" stroke-width="0.8"/><rect x="4.8" y="80.07" width="0.9" height="0.8" fill="#9a9ea2"/><rect x="4.8" y="94.72" width="0.9" height="0.8" fill="#9a9ea2"/><path d="M3.9 102.45H6.7" stroke="#959a9e" stroke-width="0.8"/><rect x="4.8" y="109.37" width="0.9" height="0.8" fill="#9a9ea2"/><rect x="4.8" y="124.03" width="0.9" height="0.8" fill="#9a9ea2"/><path d="M3.9 131.75H6.7" stroke="#959a9e" stroke-width="0.8"/><rect x="4.8" y="138.67" width="0.9" height="0.8" fill="#9a9ea2"/><rect x="4.8" y="153.32" width="0.9" height="0.8" fill="#9a9ea2"/><path d="M3.9 161.05H6.7" stroke="#959a9e" stroke-width="0.8"/><rect x="4.8" y="167.97" width="0.9" height="0.8" fill="#9a9ea2"/><rect x="4.8" y="182.62" width="0.9" height="0.8" fill="#9a9ea2"/><path d="M3.9 190.35H6.7" stroke="#959a9e" stroke-width="0.8"/><rect x="4.8" y="197.28" width="0.9" height="0.8" fill="#9a9ea2"/><rect x="4.8" y="211.92" width="0.9" height="0.8" fill="#9a9ea2"/><path d="M3.9 219.65H6.7" stroke="#959a9e" stroke-width="0.8"/><rect x="4.8" y="226.57" width="0.9" height="0.8" fill="#9a9ea2"/><rect x="4.8" y="241.22" width="0.9" height="0.8" fill="#9a9ea2"/><path d="M3.9 248.95H6.7" stroke="#959a9e" stroke-width="0.8"/><rect x="4.8" y="255.87" width="0.9" height="0.8" fill="#9a9ea2"/><rect x="4.8" y="270.53" width="0.9" height="0.8" fill="#9a9ea2"/><path d="M3.9 278.25H6.7" stroke="#959a9e" stroke-width="0.8"/><rect x="4.8" y="285.18" width="0.9" height="0.8" fill="#9a9ea2"/><rect x="4.8" y="299.82" width="0.9" height="0.8" fill="#9a9ea2"/><path d="M3.9 307.55H6.7" stroke="#959a9e" stroke-width="0.8"/><rect x="4.8" y="314.48" width="0.9" height="0.8" fill="#9a9ea2"/><rect x="4.8" y="329.12" width="0.9" height="0.8" fill="#9a9ea2"/><path d="M3.9 336.85H6.7" stroke="#959a9e" stroke-width="0.8"/><rect x="4.8" y="343.78" width="0.9" height="0.8" fill="#9a9ea2"/><rect x="4.8" y="358.43" width="0.9" height="0.8" fill="#9a9ea2"/><path d="M3.9 366.15H6.7" stroke="#959a9e" stroke-width="0.8"/><rect x="4.8" y="373.08" width="0.9" height="0.8" fill="#9a9ea2"/><rect x="4.8" y="387.72" width="0.9" height="0.8" fill="#9a9ea2"/><path d="M3.9 395.45H6.7" stroke="#959a9e" stroke-width="0.8"/><rect x="4.8" y="402.38" width="0.9" height="0.8" fill="#9a9ea2"/><rect x="4.8" y="417.03" width="0.9" height="0.8" fill="#9a9ea2"/><path d="M3.9 424.75H6.7" stroke="#959a9e" stroke-width="0.8"/><rect x="4.8" y="431.68" width="0.9" height="0.8" fill="#9a9ea2"/><rect x="4.8" y="446.33" width="0.9" height="0.8" fill="#9a9ea2"/><path d="M3.9 454.05H6.7" stroke="#959a9e" stroke-width="0.8"/><rect x="4.8" y="460.97" width="0.9" height="0.8" fill="#9a9ea2"/><text transform="translate(8.2 28.90) rotate(-90)" text-anchor="middle" font-family="Liberation Sans, sans-serif" font-size="8.1" fill="#82868a">20</text><text transform="translate(8.2 58.20) rotate(-90)" text-anchor="middle" font-family="Liberation Sans, sans-serif" font-size="8.1" fill="#82868a">40</text><text transform="translate(8.2 87.50) rotate(-90)" text-anchor="middle" font-family="Liberation Sans, sans-serif" font-size="8.1" fill="#82868a">60</text><text transform="translate(8.2 116.80) rotate(-90)" text-anchor="middle" font-family="Liberation Sans, sans-serif" font-size="8.1" fill="#82868a">80</text><text transform="translate(8.2 146.10) rotate(-90)" text-anchor="middle" font-family="Liberation Sans, sans-serif" font-size="8.1" fill="#82868a">100</text><text transform="translate(8.2 175.40) rotate(-90)" text-anchor="middle" font-family="Liberation Sans, sans-serif" font-size="8.1" fill="#82868a">120</text><text transform="translate(8.2 204.70) rotate(-90)" text-anchor="middle" font-family="Liberation Sans, sans-serif" font-size="8.1" fill="#82868a">140</text><text transform="translate(8.2 234.00) rotate(-90)" text-anchor="middle" font-family="Liberation Sans, sans-serif" font-size="8.1" fill="#82868a">160</text><text transform="translate(8.2 263.30) rotate(-90)" text-anchor="middle" font-family="Liberation Sans, sans-serif" font-size="8.1" fill="#82868a">180</text><text transform="translate(8.2 292.60) rotate(-90)" text-anchor="middle" font-family="Liberation Sans, sans-serif" font-size="8.1" fill="#82868a">200</text><text transform="translate(8.2 321.90) rotate(-90)" text-anchor="middle" font-family="Liberation Sans, sans-serif" font-size="8.1" fill="#82868a">220</text><text transform="translate(8.2 351.20) rotate(-90)" text-anchor="middle" font-family="Liberation Sans, sans-serif" font-size="8.1" fill="#82868a">240</text><text transform="translate(8.2 380.50) rotate(-90)" text-anchor="middle" font-family="Liberation Sans, sans-serif" font-size="8.1" fill="#82868a">260</text><text transform="translate(8.2 409.80) rotate(-90)" text-anchor="middle" font-family="Liberation Sans, sans-serif" font-size="8.1" fill="#82868a">280</text><text transform="translate(8.2 439.10) rotate(-90)" text-anchor="middle" font-family="Liberation Sans, sans-serif" font-size="8.1" fill="#82868a">300</text><text transform="translate(8.2 468.40) rotate(-90)" text-anchor="middle" font-family="Liberation Sans, sans-serif" font-size="8.1" fill="#82868a">320</text></svg>
<div class="a" style="left:720.5px;top:172.6px;width:15.4px;height:434.4px;background:#e4e8ee;"></div>
<div class="a" style="left:720.5px;top:172.6px;width:15.4px;height:14.6px;background:#fdfdfd;"></div>
<svg style="left:725.8px;top:178px" width="4.6" height="4" viewBox="0 0 4.6 4"><path d="M2.3 0L4.6 4H0Z" fill="#c0c4c8"/></svg>
<div class="a" style="left:720.5px;top:202.2px;width:15.4px;height:216px;background:#a0abb0;"></div>
<svg style="left:725.8px;top:308.6px" width="4.4" height="5" viewBox="0 0 4.4 5"><path d="M0 0.5H4.4M0 2.5H4.4M0 4.5H4.4" stroke="#e8ecef" stroke-width="0.8"/></svg>
<div class="a" style="left:720.5px;top:592.6px;width:15.4px;height:14.4px;background:#fdfdfd;"></div>
<svg style="left:725.8px;top:597.6px" width="4.6" height="4" viewBox="0 0 4.6 4"><path d="M0 0H4.6L2.3 4Z" fill="#c0c4c8"/></svg>
<div class="a" style="left:720.5px;top:607px;width:16.1px;height:15px;background:#fcfcfc;"></div>
<div class="a" style="left:170.2px;top:607px;width:550.3px;height:15px;background:#e4e9ee;"></div>
<div class="a" style="left:170.2px;top:607px;width:14.8px;height:15px;background:#fdfdfd;"></div>
<svg style="left:175.6px;top:612.2px" width="4" height="4.6" viewBox="0 0 4 4.6"><path d="M0 2.3L4 0V4.6Z" fill="#c0c4c8"/></svg>
<div class="a" style="left:185px;top:607px;width:267.6px;height:15px;background:#9faaaf;"></div>
<svg style="left:316.6px;top:612.3px" width="5" height="4.4" viewBox="0 0 5 4.4"><path d="M0.5 0V4.4M2.5 0V4.4M4.5 0V4.4" stroke="#e8ecef" stroke-width="0.8"/></svg>
<div class="a" style="left:706.6px;top:607px;width:14.4px;height:15px;background:#eef0f4;"></div>
<svg style="left:711.4px;top:612.2px" width="4" height="4.6" viewBox="0 0 4 4.6"><path d="M4 2.3L0 0V4.6Z" fill="#c0c4c8"/></svg>
<svg style="left:156.4px;top:627.4px" width="10" height="11.4" viewBox="0 0 10 11.4"><circle cx="4.2" cy="5.6" r="3.6" fill="#f6f7f8" stroke="#8c9094" stroke-width="1"/><path d="M3.2 0.6H5.2M4.2 0.6V2" stroke="#55585d" stroke-width="1"/><path d="M4.2 3.6V5.8H5.8" stroke="#8c9094" stroke-width="0.7" fill="none"/><path d="M5.6 7.6L9.4 8.6L6.8 10.8Z" fill="#4f9a4a"/><path d="M5.2 9.8L7 11.2" stroke="#2a2a2e" stroke-width="1"/></svg>
<svg style="left:693.6px;top:628.8px" width="10.18" height="11.24" viewBox="0 0 9.6 10.6"><path d="M4.8 0.4V10.2M0.4 7.2H9.2M2 4H7.6" stroke="#7d8186" stroke-width="1"/><path d="M3 0.2H6.6L4.8 2Z" fill="#2f7fb0"/><rect x="2.6" y="8.6" width="4.4" height="1.6" fill="#f3f5f6" stroke="#7d8186" stroke-width="0.7"/></svg>
<svg style="left:719.2px;top:632.8px" width="4.8" height="3.2" viewBox="0 0 4.8 3.2"><path d="M2.3 0L4.6 3H0Z" fill="#b9bdc1"/></svg>
<svg style="left:673.6px;top:552px" width="9" height="14" viewBox="0 0 9 14"><path d="M0.6 0.8V11L3.2 8.6L5 12.8L6.8 12L5 8H8.2Z" fill="#fdfdfd" stroke="#1a1a1c" stroke-width="0.9" stroke-linejoin="round"/></svg>
<div class="a" style="left:736.6px;top:152px;width:261.4px;height:59px;background:#f1f4f6;"></div>
<svg style="left:960.3px;top:166.1px" width="4.4" height="2.6" viewBox="0 0 4.4 2.6"><path d="M0 0H4.4L2.2 2.6Z" fill="#b4b8bc"/></svg>
<svg style="left:972.5999999999999px;top:162px" width="9.46" height="8.8" viewBox="0 0 8.6 8"><rect x="2" y="0.5" width="6" height="4.6" fill="#f2f5f6" stroke="#9da1a5" stroke-width="0.9"/><path d="M2 1.4H8" stroke="#9da1a5" stroke-width="1.4"/><rect x="0.5" y="2.8" width="6" height="4.6" fill="#fdfdfd" stroke="#9da1a5" stroke-width="0.9"/><path d="M0.5 3.6H6.5" stroke="#9da1a5" stroke-width="1.4"/></svg>
<div class="a" style="left:752.2px;top:181.4px;width:20.4px;height:20.3px;background:#fdfdfd;border:1px solid #d5d9dc;"></div>
<div class="a" style="left:774.2px;top:181.4px;width:20.4px;height:20.3px;background:#eef1f4;border:1px solid #d5d9dc;"></div>
<div class="a" style="left:796.3px;top:181.4px;width:20.4px;height:20.3px;background:#eef1f4;border:1px solid #d5d9dc;"></div>
<div class="a" style="left:818.3px;top:181.4px;width:20.4px;height:20.3px;background:#eef1f4;border:1px solid #d5d9dc;"></div>
<div class="a" style="left:840.4px;top:181.4px;width:20.4px;height:20.3px;background:#eef1f4;border:1px solid #d5d9dc;"></div>
<div class="a" style="left:862.4px;top:181.4px;width:20.4px;height:20.3px;background:#eef1f4;border:1px solid #d5d9dc;"></div>
<svg style="left:758.2px;top:186px" width="8.88" height="11.52" viewBox="0 0 7.4 9.6"><path d="M0.5 0.5H4.800000000000001L6.9 2.6V9.1H0.5Z" fill="#fdfdfd" stroke="#55585d" stroke-width="0.9"/><path d="M4.800000000000001 0.5V2.6H6.9" fill="none" stroke="#55585d" stroke-width="0.7"/></svg>
<svg style="left:778.6px;top:185.8px" width="12.1" height="11.66" viewBox="0 0 11 10.6"><rect x="0.5" y="2" width="7.6" height="7.6" fill="#f8f9fa" stroke="#b0b4b8" stroke-width="0.8"/><path d="M3.4 7L4 5L8.6 0.6L10 2L5.4 6.4Z" fill="#fdfdfd" stroke="#aeb2b6" stroke-width="0.8"/></svg>
<svg style="left:800.2px;top:186.2px" width="11.65" height="12.1" viewBox="0 0 10.4 10.8"><path d="M0.5 0.5H4.6L6.4 2.3V8H0.5Z" fill="#f8f9fa" stroke="#b0b4b8" stroke-width="0.8"/><path d="M3.4 2.8H7.6L9.6 4.8V10.3H3.4Z" fill="#f8f9fa" stroke="#b0b4b8" stroke-width="0.8"/></svg>
<svg style="left:822.2px;top:185.6px" width="11.87" height="12.32" viewBox="0 0 10.6 11"><rect x="0.5" y="1.6" width="7" height="8.6" fill="#f1f2f4" stroke="#b0b4b8" stroke-width="0.8"/><rect x="2.4" y="0.4" width="3.2" height="2" fill="#b0b4b8"/><path d="M4.4 4H8L9.9 5.9V10.5H4.4Z" fill="#f8f9fa" stroke="#b0b4b8" stroke-width="0.8"/></svg>
<svg style="left:845.2px;top:185.4px" width="10.35" height="12.19" viewBox="0 0 9 10.6"><path d="M0.2 2H8.8M3.2 2V0.6H5.8V2" stroke="#b0b4b8" stroke-width="0.9" fill="none"/><path d="M1.2 2.4L2 10H7L7.8 2.4" stroke="#b0b4b8" stroke-width="0.9" fill="none"/><path d="M3.4 4V8.6M5.6 4V8.6" stroke="#b0b4b8" stroke-width="0.7"/></svg>
<div class="a" style="left:862.4px;top:191px;width:20.4px;height:1px;background:#d5d9dc;"></div>
<svg style="left:870.2px;top:184.8px" width="4.8" height="3.4" viewBox="0 0 4.8 3.4"><path d="M2.4 0L4.8 3.4H0Z" fill="#b4b8bc"/></svg>
<svg style="left:870.2px;top:194.8px" width="4.8" height="3.4" viewBox="0 0 4.8 3.4"><path d="M0 0H4.8L2.4 3.4Z" fill="#b4b8bc"/></svg>
<svg style="left:911.2px;top:185.6px" width="13" height="13" viewBox="0 0 13 13"><rect x="0.5" y="0.5" width="12" height="12" fill="#fdfdfd" stroke="#d0d4d8" stroke-width="1"/><path d="M3.12 6.50L5.72 9.10L10.40 3.38" stroke="#2273c3" stroke-width="1.5" fill="none"/></svg>
<div class="a" style="left:930px;top:197.4px;width:6.4px;height:0.8px;background:#6f7377;"></div>
<div class="a" style="left:963.6px;top:181.4px;width:20.4px;height:20.3px;background:#fdfdfd;border:1px solid #d5d9dc;"></div>
<svg style="left:968.6px;top:186.4px" width="10.4" height="10.4" viewBox="0 0 10.4 10.4"><rect x="0.5" y="0.5" width="9.4" height="9.4" fill="#fdfdfd" stroke="#6c7074" stroke-width="0.9"/><path d="M0.5 2H9.9" stroke="#6c7074" stroke-width="2"/><path d="M2.6 4.4H2V8H2.6M7.8 4.4H8.4V8H7.8M4 5L6.4 7.4M6.4 5L4 7.4" stroke="#5b86ad" stroke-width="0.7" fill="none"/></svg>
<div class="a" style="left:736.6px;top:459.5px;width:261.4px;height:30.2px;background:#f1f4f6;border-top:1px solid #e9ecee;border-bottom:1px solid #e9ecee"></div>
<svg style="left:959.8px;top:473.1px" width="4.4" height="2.6" viewBox="0 0 4.4 2.6"><path d="M0 0H4.4L2.2 2.6Z" fill="#b4b8bc"/></svg>
<svg style="left:972.1999999999999px;top:469px" width="9.46" height="8.8" viewBox="0 0 8.6 8"><rect x="2" y="0.5" width="6" height="4.6" fill="#f2f5f6" stroke="#9da1a5" stroke-width="0.9"/><path d="M2 1.4H8" stroke="#9da1a5" stroke-width="1.4"/><rect x="0.5" y="2.8" width="6" height="4.6" fill="#fdfdfd" stroke="#9da1a5" stroke-width="0.9"/><path d="M0.5 3.6H6.5" stroke="#9da1a5" stroke-width="1.4"/></svg>
<div class="a" style="left:739.6px;top:507.8px;width:254.8px;height:23px;background:#1a80d6;"></div>
<div class="a" style="left:752.2px;top:515.3px;width:23px;height:9px;background:#7ea1a9;"></div>
<div class="a" style="left:762.6px;top:519px;width:4.4px;height:1.8px;background:#a9bf9a;"></div>
<div class="a" style="left:752.2px;top:534.3px;width:23.3px;height:16.6px;background:#fdfdfd;border:1px solid #e0e4e7"></div>
<div class="a" style="left:761.4px;top:543.2px;width:5.4px;height:0.8px;background:#e6e9eb;"></div>
<div class="a" style="left:763.8px;top:540px;width:0.8px;height:5.6px;background:#eceef0;"></div>
<div class="a" style="left:752.2px;top:557.8px;width:23.3px;height:16.6px;background:#fdfdfd;border:1px solid #e0e4e7"></div>
<div class="a" style="left:761.4px;top:566.8px;width:5.4px;height:0.8px;background:#e6e9eb;"></div>
<div class="a" style="left:763.8px;top:563.6px;width:0.8px;height:5.6px;background:#eceef0;"></div>
<div class="a" style="left:736.6px;top:579.6px;width:261.4px;height:28.2px;background:#f8f9fa;border-top:1px solid #e9ecee;border-bottom:1px solid #e9ecee"></div>
<div class="a" style="left:752.6px;top:586.1px;width:22.3px;height:15.8px;background:#1d1d1f;"></div>
<svg style="left:975.6px;top:591.4px" width="8.6" height="5.4" viewBox="0 0 8.6 5.4"><path d="M0.2 2.7C2 0.2 6.6 0.2 8.4 2.7C6.6 5.2 2 5.2 0.2 2.7Z" fill="#4d5055"/><circle cx="4.3" cy="2.7" r="1.2" fill="#f8f9fa"/></svg>
<div class="a" style="left:736.6px;top:607.8px;width:261.4px;height:36.4px;background:#f3f5f6;"></div>
<div class="a" style="left:752.1px;top:615.6px;width:20.5px;height:20.2px;background:#fdfdfd;border:1px solid #d5d9dc;"></div>
<div class="a" style="left:774.4px;top:615.6px;width:20.5px;height:20.2px;background:#fdfdfd;border:1px solid #d5d9dc;"></div>
<div class="a" style="left:796.8px;top:615.6px;width:20.5px;height:20.2px;background:#fdfdfd;border:1px solid #d5d9dc;"></div>
<div class="a" style="left:969.4px;top:615.6px;width:20.5px;height:20.2px;background:#fdfdfd;border:1px solid #d5d9dc;"></div>
<svg style="left:758px;top:620px" width="8.88" height="11.52" viewBox="0 0 7.4 9.6"><path d="M0.5 0.5H4.800000000000001L6.9 2.6V9.1H0.5Z" fill="#fdfdfd" stroke="#55585d" stroke-width="0.9"/><path d="M4.800000000000001 0.5V2.6H6.9" fill="none" stroke="#55585d" stroke-width="0.7"/></svg>
<svg style="left:778.8px;top:619.8px" width="12.1" height="12.1" viewBox="0 0 11 11"><path d="M2.6 0.6H10V8H2.6Z" fill="#fdfdfd" stroke="#6c7074" stroke-width="0.8"/><path d="M0.6 4.4L2.2 2.8H7.4V10.4H0.6Z" fill="#fdfdfd" stroke="#4d5055" stroke-width="0.9"/><rect x="2.6" y="5" width="3.6" height="3.6" fill="#6aa863"/><path d="M3 7L4.2 8.2L8.2 3.4" stroke="#3e7d3a" stroke-width="0.8" fill="none"/></svg>
<svg style="left:802px;top:619.8px" width="10.35" height="12.19" viewBox="0 0 9 10.6"><path d="M0.2 2H8.8M3.2 2V0.6H5.8V2" stroke="#6c7074" stroke-width="0.9" fill="none"/><path d="M1.2 2.4L2 10H7L7.8 2.4" stroke="#6c7074" stroke-width="0.9" fill="none"/><path d="M3.4 4V8.6M5.6 4V8.6" stroke="#6c7074" stroke-width="0.7"/></svg>
<svg style="left:824.4px;top:620.6px" width="12.8" height="12.8" viewBox="0 0 12.8 12.8"><rect x="0.5" y="0.5" width="11.8" height="11.8" fill="#fdfdfd" stroke="#d0d4d8" stroke-width="1"/><path d="M3.07 6.40L5.63 8.96L10.24 3.33" stroke="#2273c3" stroke-width="1.5" fill="none"/></svg>
<svg style="left:974.4px;top:620.6px" width="10.4" height="10.4" viewBox="0 0 10.4 10.4"><rect x="4.06" y="0" width="2.29" height="10.40" fill="#8d9195" transform="rotate(0 5.2 5.2)"/><rect x="4.06" y="0" width="2.29" height="10.40" fill="#8d9195" transform="rotate(45 5.2 5.2)"/><rect x="4.06" y="0" width="2.29" height="10.40" fill="#8d9195" transform="rotate(90 5.2 5.2)"/><rect x="4.06" y="0" width="2.29" height="10.40" fill="#8d9195" transform="rotate(135 5.2 5.2)"/><circle cx="5.2" cy="5.2" r="3.85" fill="#8d9195"/><circle cx="5.2" cy="5.2" r="1.98" fill="#fdfdfd"/></svg>
<div class="a" style="left:0px;top:666.6px;width:998px;height:2.4px;background:#222026;"></div>
<svg style="left:796px;top:651.6px" width="8.6" height="8" viewBox="0 0 8.6 8"><rect x="0" y="0" width="3.8" height="3.4" fill="#e4e4e8"/><rect x="4.8" y="0" width="3.8" height="3.4" fill="#e4e4e8"/><rect x="0" y="4.4" width="3.8" height="3.4" fill="#e4e4e8"/><rect x="4.8" y="4.4" width="3.8" height="3.4" fill="#e4e4e8"/></svg>
<div class="a" style="left:810.6px;top:648px;width:16px;height:15.4px;background:#1f1d22;"></div>
<svg style="left:814.4px;top:651.6px" width="9" height="8" viewBox="0 0 9 8"><rect x="0.5" y="0.5" width="8" height="7" fill="none" stroke="#e4e4e8" stroke-width="1"/><rect x="3" y="1.6" width="4.4" height="3" fill="#e4e4e8"/><path d="M1.6 6H7.4" stroke="#e4e4e8" stroke-width="0.8"/></svg>
<svg style="left:832px;top:651px" width="9.4" height="9.4" viewBox="0 0 9.4 9.4"><path d="M0 0.6H9.4" stroke="#d4d4d8" stroke-width="1.2"/><rect x="1" y="1.4" width="7.4" height="4.4" fill="none" stroke="#d4d4d8" stroke-width="0.8"/><path d="M4.7 5.8V7.6M2.4 9L4.7 7.2L7 9" stroke="#d4d4d8" stroke-width="0.8" fill="none"/></svg>
<svg style="left:875.6px;top:651px" width="110" height="10" viewBox="0 0 110 10"><path d="M0.4 5H4.4" stroke="#d4d4d8" stroke-width="1"/><path d="M8.4 5H82" stroke="#dedee2" stroke-width="1.4"/><path d="M46 2.4V7.6" stroke="#d4d4d8" stroke-width="1"/><circle cx="57" cy="5" r="2.5" fill="#2c2a31" stroke="#e4e4e8" stroke-width="1"/><path d="M85.6 5H90.6M88.1 2.5V7.5" stroke="#d4d4d8" stroke-width="1"/></svg>
<svg style="left:973px;top:651px" width="9.6" height="9.6" viewBox="0 0 9.6 9.6"><rect x="0.5" y="0.5" width="8.6" height="8.6" fill="none" stroke="#d4d4d8" stroke-width="1"/><path d="M2 3.6V2H3.6M6 2H7.6V3.6M7.6 6V7.6H6M3.6 7.6H2V6M2 2L4 4M7.6 2L5.6 4M7.6 7.6L5.6 5.6M2 7.6L4 5.6" stroke="#d4d4d8" stroke-width="0.8" fill="none"/></svg>
<div class="t" style="left:4.8px;top:8px;font-size:5.6px;color:#fff;font-weight:bold;letter-spacing:0.522px;">SL</div>
<div class="t" style="left:431.2px;top:7px;font-size:8.2px;color:#999ca0;letter-spacing:0.187px;">corners.story* -  Articulate Storyline</div>
<div class="t" style="left:985.4px;top:25px;font-size:7.6px;color:#fff;font-weight:bold;letter-spacing:0.359px;">?</div>
<div class="t" style="left:10.0px;top:26px;font-size:7.7px;color:#fff;font-weight:bold;letter-spacing:-0.414px;">FILE</div>
<div class="t" style="left:49.4px;top:26px;font-size:7.7px;color:#2a6db3;letter-spacing:0.434px;">HOME</div>
<div class="t" style="left:93.0px;top:26px;font-size:7.7px;color:#50545a;letter-spacing:-0.194px;">INSERT</div>
<div class="t" style="left:139.1px;top:26px;font-size:7.7px;color:#50545a;letter-spacing:-0.460px;">SLIDES</div>
<div class="t" style="left:185.0px;top:26px;font-size:7.7px;color:#50545a;letter-spacing:-0.114px;">DESIGN</div>
<div class="t" style="left:230.6px;top:26px;font-size:7.7px;color:#50545a;letter-spacing:-0.053px;">TRANSITIONS</div>
<div class="t" style="left:297.2px;top:26px;font-size:7.7px;color:#50545a;letter-spacing:0.113px;">ANIMATIONS</div>
<div class="t" style="left:364.8px;top:26px;font-size:7.7px;color:#50545a;letter-spacing:0.186px;">VIEW</div>
<div class="t" style="left:407.4px;top:26px;font-size:7.7px;color:#50545a;letter-spacing:-0.248px;">HELP</div>
<div class="t" style="left:35.4px;top:90px;font-size:8.3px;color:#4d5155;letter-spacing:0.176px;">Clipboard</div>
<div class="t" style="left:153.4px;top:90px;font-size:8.3px;color:#4d5155;letter-spacing:0.029px;">Slide</div>
<div class="t" style="left:333.5px;top:90px;font-size:8.3px;color:#4d5155;letter-spacing:0.298px;">Font</div>
<div class="t" style="left:553.4px;top:90px;font-size:8.3px;color:#4d5155;letter-spacing:0.028px;">Paragraph</div>
<div class="t" style="left:735.3px;top:90px;font-size:8.3px;color:#4d5155;letter-spacing:0.223px;">Drawing</div>
<div class="t" style="left:869.8px;top:90px;font-size:8.3px;color:#4d5155;letter-spacing:0.012px;">Publish</div>
<div class="t" style="left:6.4px;top:69px;font-size:8.3px;color:#474b50;letter-spacing:-0.244px;">Paste</div>
<div class="t" style="left:47.2px;top:45px;font-size:8.3px;color:#94989c;letter-spacing:-0.041px;">Cut</div>
<div class="t" style="left:46.7px;top:61px;font-size:8.3px;color:#94989c;letter-spacing:-0.019px;">Copy</div>
<div class="t" style="left:46.7px;top:77px;font-size:8.3px;color:#94989c;letter-spacing:0.023px;">Format Painter</div>
<div class="t" style="left:117.3px;top:69px;font-size:8.3px;color:#474b50;">New</div>
<div class="t" style="left:114.1px;top:79px;font-size:8.3px;color:#474b50;letter-spacing:-0.031px;">Slide</div>
<div class="t" style="left:155.6px;top:44px;font-size:8.3px;color:#474b50;letter-spacing:0.085px;">Apply Layout</div>
<div class="t" style="left:155.6px;top:60px;font-size:8.3px;color:#474b50;letter-spacing:0.054px;">Focus Order</div>
<div class="t" style="left:155.6px;top:77px;font-size:8.3px;color:#474b50;letter-spacing:0.178px;">Duplicate</div>
<div class="t" style="left:224.0px;top:69px;font-size:8.3px;color:#74787c;letter-spacing:-0.111px;">Text Styles</div>
<div class="t" style="left:612.1px;top:44px;font-size:8.3px;color:#5c6064;letter-spacing:0.088px;">Text Direction</div>
<div class="t" style="left:612.1px;top:60px;font-size:8.3px;color:#5c6064;letter-spacing:0.077px;">Align Text</div>
<div class="t" style="left:612.1px;top:77px;font-size:8.3px;color:#474b50;letter-spacing:-0.014px;">Find / Replace</div>
<div class="t" style="left:685.3px;top:69px;font-size:8.3px;color:#84888c;letter-spacing:0.110px;">Arrange</div>
<div class="t" style="left:722.4px;top:69px;font-size:8.3px;color:#8a8e92;letter-spacing:-0.044px;">Quick</div>
<div class="t" style="left:720.5px;top:79px;font-size:8.3px;color:#8a8e92;letter-spacing:-0.166px;">Styles</div>
<div class="t" style="left:765.1px;top:45px;font-size:8.3px;color:#787c80;letter-spacing:0.019px;">Shape Fill</div>
<div class="t" style="left:765.1px;top:60px;font-size:8.3px;color:#787c80;letter-spacing:0.154px;">Shape Outline</div>
<div class="t" style="left:765.1px;top:75px;font-size:8.3px;color:#787c80;">Shape Effect</div>
<div class="t" style="left:840.6px;top:69px;font-size:8.3px;color:#474b50;letter-spacing:-0.289px;">Player</div>
<div class="t" style="left:867.9px;top:69px;font-size:8.3px;color:#474b50;letter-spacing:-0.117px;">Preview</div>
<div class="t" style="left:900.4px;top:69px;font-size:8.3px;color:#474b50;letter-spacing:0.083px;">Publish</div>
<div class="t" style="left:35.9px;top:137px;font-size:8px;color:#50545a;letter-spacing:-0.330px;">STORY VIEW</div>
<div class="t" style="left:108.6px;top:137px;font-size:10.2px;color:#fff;letter-spacing:-0.442px;">1.4 Click</div>
<div class="t" style="left:272.9px;top:72px;font-size:8.4px;color:#bfc2c5;font-weight:bold;letter-spacing:0.237px;font-family:"Liberation Serif",serif;">B</div>
<div class="t" style="left:290.0px;top:72px;font-size:8.4px;color:#bfc2c5;font-style:italic;letter-spacing:2.472px;font-family:"Liberation Serif",serif;">I</div>
<div class="t" style="left:305.0px;top:72px;font-size:8.2px;color:#bfc2c5;letter-spacing:0.878px;text-decoration:underline;">U</div>
<div class="t" style="left:322.0px;top:71px;font-size:8.4px;color:#bfc2c5;letter-spacing:0.406px;text-shadow:0.8px 0.8px 0.5px #d8dadc;">S</div>
<div class="t" style="left:334.9px;top:72px;font-size:7.4px;color:#c6c9cc;letter-spacing:0.126px;text-decoration:line-through;">abc</div>
<div class="t" style="left:350.9px;top:70px;font-size:8.4px;color:#bfc2c5;letter-spacing:0.619px;">AV</div>
<div class="t" style="left:375.6px;top:71px;font-size:9px;color:#bfc2c5;letter-spacing:0.692px;">Aa</div>
<div class="t" style="left:404.3px;top:72px;font-size:6.6px;color:#bfc2c5;letter-spacing:0.078px;">ab</div>
<div class="t" style="left:432.4px;top:71px;font-size:10px;color:#bfc2c5;letter-spacing:1.228px;">A</div>
<div class="t" style="left:460.2px;top:70px;font-size:4.4px;color:#3a3d42;font-weight:bold;letter-spacing:0.228px;">ABC</div>
<div class="t" style="left:425.8px;top:49px;font-size:9.6px;color:#bfc2c5;letter-spacing:1.594px;">A</div>
<div class="t" style="left:442.6px;top:51px;font-size:8px;color:#bfc2c5;letter-spacing:1.456px;">A</div>
<div class="t" style="left:461.0px;top:49px;font-size:6.4px;color:#cdd0d2;letter-spacing:0.934px;">A</div>
<div class="t" style="left:13.4px;top:162px;font-size:11.2px;color:#5c6064;letter-spacing:-0.421px;">Scenes</div>
<div class="t" style="left:22.8px;top:188px;font-size:8.8px;color:#54585c;letter-spacing:0.265px;">1 Untitled Scene</div>
<div class="t" style="left:20.9px;top:285px;font-size:8.2px;color:#5e6266;letter-spacing:0.094px;">1.1 Untitled Slide</div>
<div class="t" style="left:21.3px;top:402px;font-size:8.2px;color:#5e6266;letter-spacing:-0.090px;">1.2 Click</div>
<div class="t" style="left:21.3px;top:518px;font-size:8.2px;color:#5e6266;letter-spacing:-0.090px;">1.3 Click</div>
<div class="t" style="left:21.3px;top:634px;font-size:8.2px;color:#5e6266;letter-spacing:-0.090px;">1.4 Click</div>
<div class="t" style="left:449.6px;top:281px;font-size:22.4px;color:#f4f8fa;letter-spacing:0.177px;">Click</div>
<div class="t" style="left:171.6px;top:629px;font-size:8.8px;color:#5c6064;letter-spacing:0.212px;">Timeline, States, Notes</div>
<div class="t" style="left:752.0px;top:162px;font-size:11.2px;color:#5c6064;letter-spacing:0.072px;">Triggers</div>
<div class="t" style="left:929.6px;top:188px;font-size:8.8px;color:#54585c;letter-spacing:0.649px;">Group</div>
<div class="t" style="left:751.8px;top:469px;font-size:11.2px;color:#5c6064;letter-spacing:-0.040px;">Slide Layers</div>
<div class="t" style="left:785.0px;top:516px;font-size:8.4px;color:#fdfdfd;letter-spacing:0.309px;">Hint Caption</div>
<div class="t" style="left:785.0px;top:539px;font-size:8.4px;color:#696d71;letter-spacing:0.114px;">Try Again</div>
<div class="t" style="left:785.0px;top:563px;font-size:8.4px;color:#696d71;letter-spacing:0.131px;">Rectangular Hotspot 1</div>
<div class="t" style="left:785.0px;top:590px;font-size:8.4px;color:#696d71;letter-spacing:0.229px;">Click</div>
<div class="t" style="left:919.6px;top:591px;font-size:8.2px;color:#606468;font-style:italic;letter-spacing:0.060px;">(Base Layer)</div>
<div class="t" style="left:842.6px;top:624px;font-size:8.8px;color:#54585c;letter-spacing:0.520px;">Dim</div>
<div class="t" style="left:3.6px;top:653px;font-size:7.8px;color:#bdbdc1;letter-spacing:0.226px;">Slide 4 of 10</div>
<div class="t" style="left:61.1px;top:653px;font-size:7.8px;color:#bdbdc1;letter-spacing:0.233px;">720 × 540</div>
<div class="t" style="left:110.2px;top:653px;font-size:7.8px;color:#bdbdc1;letter-spacing:0.491px;">'Polished'</div>
<div class="t" style="left:847.6px;top:653px;font-size:7.6px;color:#bdbdc1;letter-spacing:0.241px;">200%</div>
</div>
</body></html>
